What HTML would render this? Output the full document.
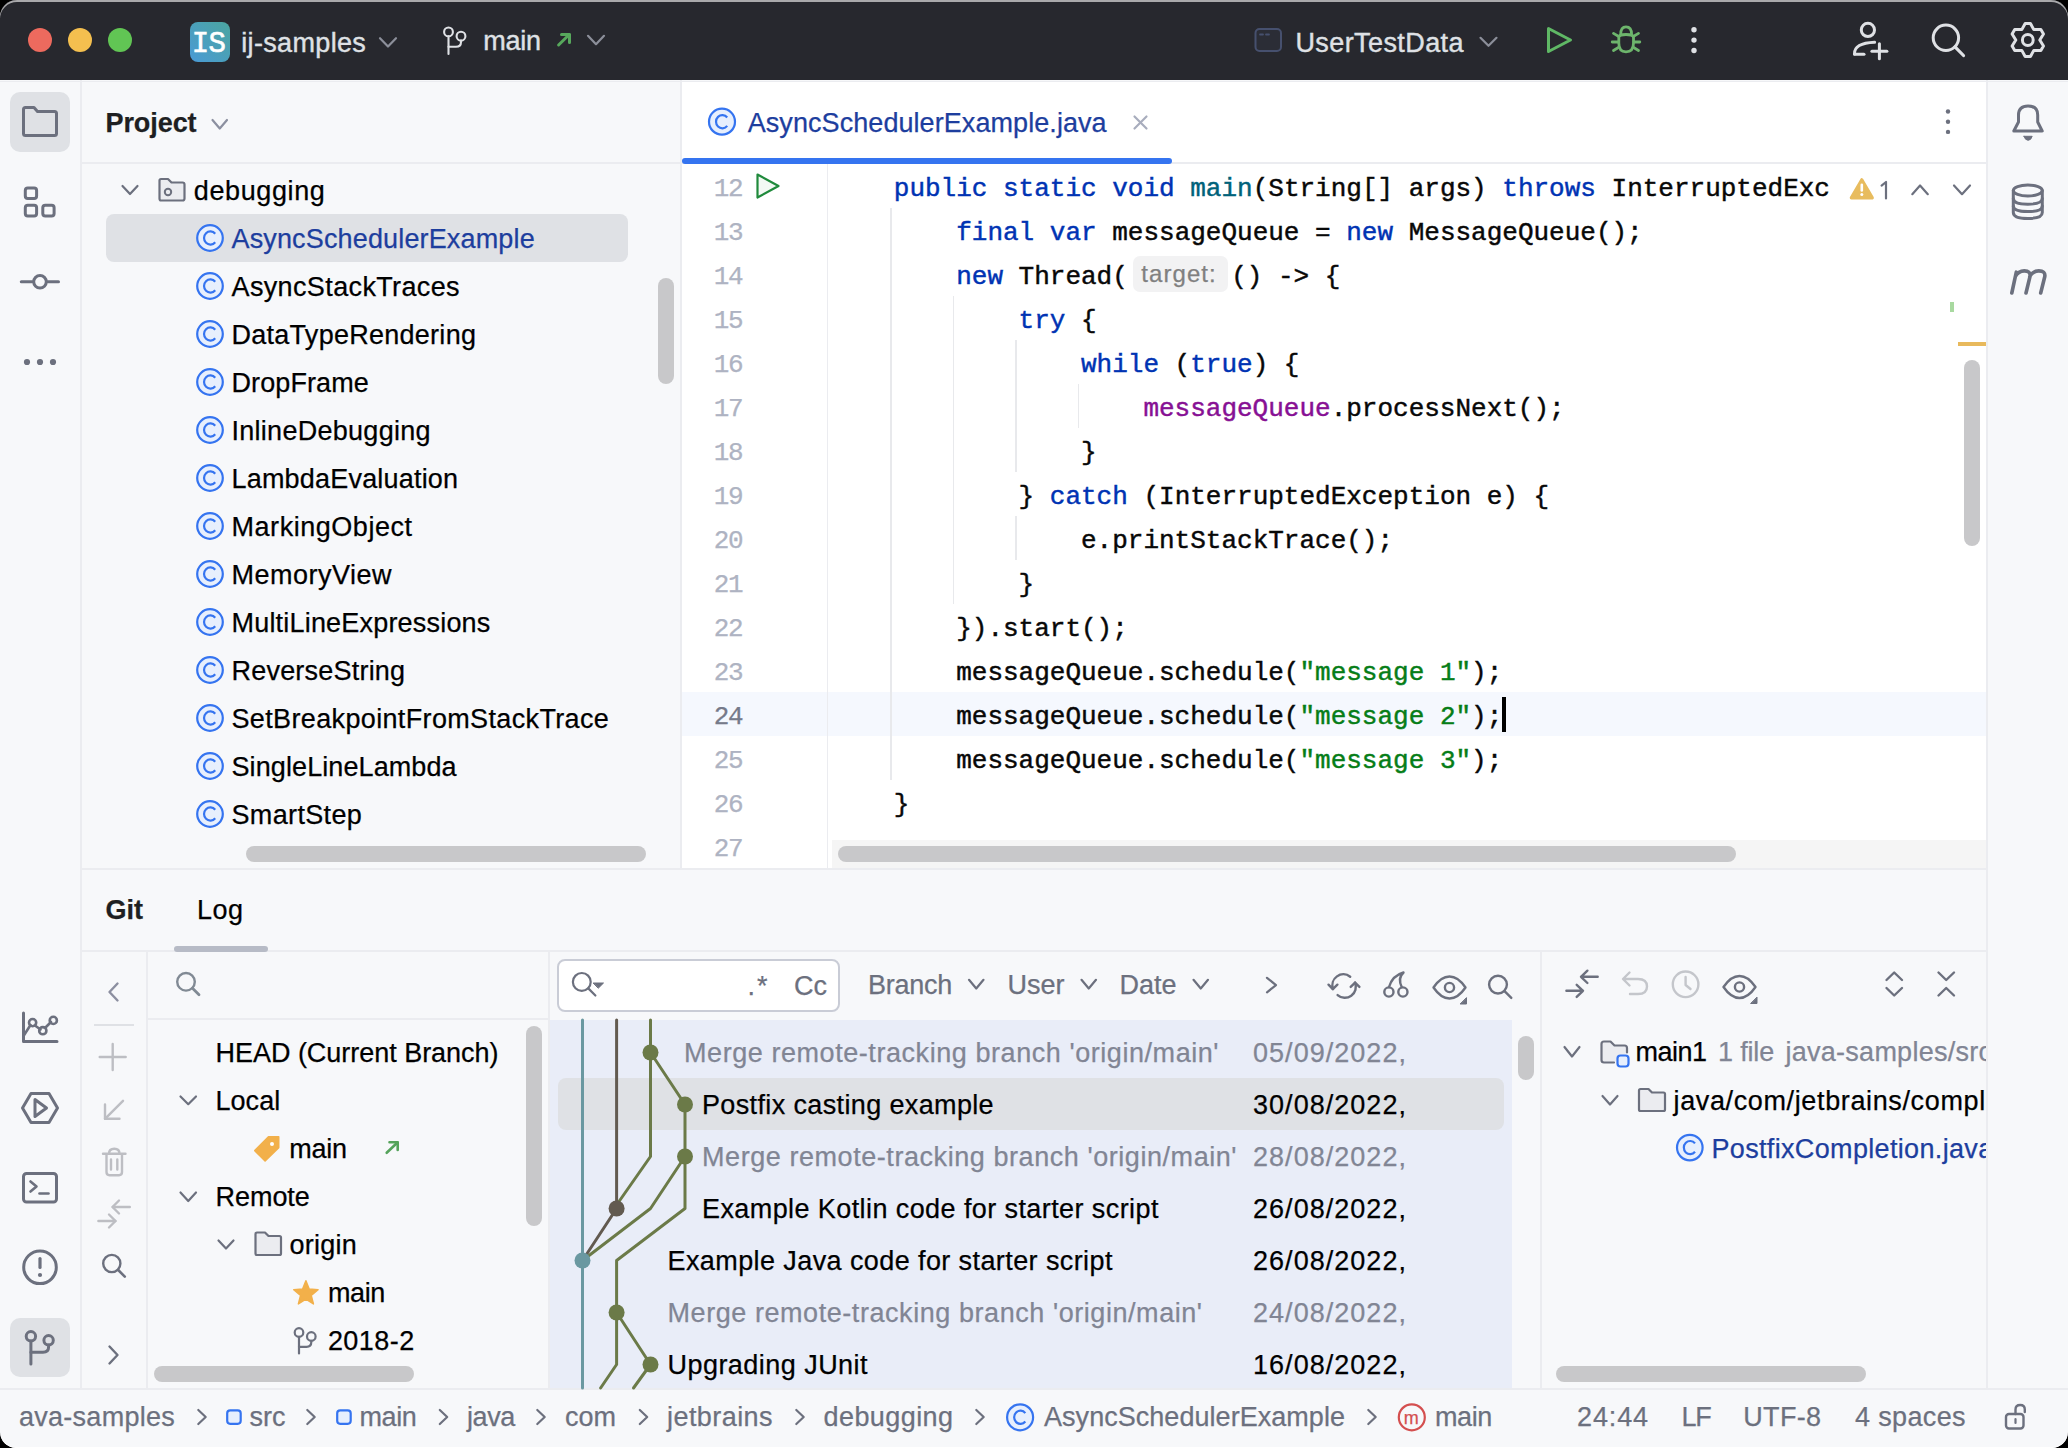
<!DOCTYPE html>
<html><head><meta charset="utf-8">
<style>
*{box-sizing:border-box}
html,body{margin:0;padding:0;background:#000;width:2068px;height:1448px;overflow:hidden}
body{font-family:"Liberation Sans",sans-serif;font-size:27px;color:#000}
.a{position:absolute}
#win{position:absolute;left:0;top:0;width:2068px;height:1448px;border-radius:17px 17px 16px 16px;overflow:hidden;background:#f7f8fa}
.t{position:absolute;white-space:nowrap;line-height:1}
.t{-webkit-text-stroke:0.25px currentColor}
.mono{font-family:"Liberation Mono",monospace;font-size:26px;letter-spacing:0;-webkit-text-stroke:0.45px currentColor}
svg{overflow:visible}
</style></head>
<body><div id="win">

<div class="a" style="left:0px;top:0px;width:2068px;height:80px;background:#27282e;border-radius:0px;"></div>
<div class="a" style="left:682px;top:82px;width:1304px;height:786px;background:#fff;border-radius:0px;"></div>
<div class="a" style="left:0px;top:81px;width:2068px;height:1.2px;background:#ebecf0;border-radius:0px;"></div>
<div class="a" style="left:80px;top:80px;width:2px;height:1308px;background:#ebecf0;border-radius:0px;"></div>
<div class="a" style="left:680px;top:80px;width:2px;height:788px;background:#ebecf0;border-radius:0px;"></div>
<div class="a" style="left:1986px;top:80px;width:2px;height:1308px;background:#ebecf0;border-radius:0px;"></div>
<div class="a" style="left:82px;top:162px;width:598px;height:2px;background:#ebecf0;border-radius:0px;"></div>
<div class="a" style="left:682px;top:162px;width:1304px;height:2px;background:#ebecf0;border-radius:0px;"></div>
<div class="a" style="left:82px;top:868px;width:1904px;height:2px;background:#ebecf0;border-radius:0px;"></div>
<div class="a" style="left:0px;top:1388px;width:2068px;height:2px;background:#ebecf0;border-radius:0px;"></div>
<div class="a" style="left:190px;top:22px;width:40px;height:40px;border-radius:8px;background:linear-gradient(45deg,#4a9ad6 0%,#4ba59f 100%)"></div>
<div class="t" style="left:191.80px;top:29.58px;font-size:29px;color:#fff;letter-spacing:-0.650px;font-family:'Liberation Mono',monospace;-webkit-text-stroke:0.6px #fff">IS</div>
<div class="t" style="left:241.20px;top:29.74px;font-size:27px;color:#dfe1e5;letter-spacing:0.348px;font-family:'Liberation Sans',sans-serif;-webkit-text-stroke:0.4px #dfe1e5">ij-samples</div>
<div class="t" style="left:483.30px;top:28.14px;font-size:27px;color:#dfe1e5;letter-spacing:-0.254px;font-family:'Liberation Sans',sans-serif;-webkit-text-stroke:0.4px #dfe1e5">main</div>
<div class="t" style="left:1295.40px;top:29.74px;font-size:27px;color:#dfe1e5;letter-spacing:0.413px;font-family:'Liberation Sans',sans-serif;-webkit-text-stroke:0.4px #dfe1e5">UserTestData</div>
<div class="a" style="left:10px;top:92px;width:60px;height:60px;background:#dfe1e5;border-radius:10px;"></div>
<div class="a" style="left:10px;top:1318px;width:60px;height:59px;background:#dfe1e5;border-radius:10px;"></div>
<div class="t" style="left:105.50px;top:109.74px;font-size:27px;color:#1e1f22;letter-spacing:-0.076px;font-family:'Liberation Sans',sans-serif;font-weight:bold;">Project</div>
<div class="t" style="left:193.80px;top:177.94px;font-size:27px;color:#000;letter-spacing:0.619px;font-family:'Liberation Sans',sans-serif;">debugging</div>
<div class="a" style="left:106px;top:214px;width:522px;height:48px;background:#dfe1e5;border-radius:8px;"></div>
<div class="t" style="left:231.50px;top:225.94px;font-size:27px;color:#1d3e9e;letter-spacing:0.150px;font-family:'Liberation Sans',sans-serif;">AsyncSchedulerExample</div>
<div class="t" style="left:231.50px;top:273.94px;font-size:27px;color:#000;letter-spacing:0.370px;font-family:'Liberation Sans',sans-serif;">AsyncStackTraces</div>
<div class="t" style="left:231.50px;top:321.94px;font-size:27px;color:#000;letter-spacing:0.267px;font-family:'Liberation Sans',sans-serif;">DataTypeRendering</div>
<div class="t" style="left:231.50px;top:369.94px;font-size:27px;color:#000;letter-spacing:0.098px;font-family:'Liberation Sans',sans-serif;">DropFrame</div>
<div class="t" style="left:231.50px;top:417.94px;font-size:27px;color:#000;letter-spacing:0.276px;font-family:'Liberation Sans',sans-serif;">InlineDebugging</div>
<div class="t" style="left:231.50px;top:465.94px;font-size:27px;color:#000;letter-spacing:0.196px;font-family:'Liberation Sans',sans-serif;">LambdaEvaluation</div>
<div class="t" style="left:231.50px;top:513.94px;font-size:27px;color:#000;letter-spacing:0.543px;font-family:'Liberation Sans',sans-serif;">MarkingObject</div>
<div class="t" style="left:231.50px;top:561.94px;font-size:27px;color:#000;letter-spacing:0.497px;font-family:'Liberation Sans',sans-serif;">MemoryView</div>
<div class="t" style="left:231.50px;top:609.94px;font-size:27px;color:#000;letter-spacing:0.195px;font-family:'Liberation Sans',sans-serif;">MultiLineExpressions</div>
<div class="t" style="left:231.50px;top:657.94px;font-size:27px;color:#000;letter-spacing:0.211px;font-family:'Liberation Sans',sans-serif;">ReverseString</div>
<div class="t" style="left:231.50px;top:705.94px;font-size:27px;color:#000;letter-spacing:0.354px;font-family:'Liberation Sans',sans-serif;">SetBreakpointFromStackTrace</div>
<div class="t" style="left:231.50px;top:753.94px;font-size:27px;color:#000;letter-spacing:0.096px;font-family:'Liberation Sans',sans-serif;">SingleLineLambda</div>
<div class="t" style="left:231.50px;top:801.94px;font-size:27px;color:#000;letter-spacing:0.350px;font-family:'Liberation Sans',sans-serif;">SmartStep</div>
<div class="a" style="left:658px;top:278px;width:16px;height:106px;background:#c8c8ca;border-radius:8px;"></div>
<div class="a" style="left:246px;top:846px;width:400px;height:16px;background:#c8c8ca;border-radius:8px;"></div>
<div class="t" style="left:747.70px;top:109.64px;font-size:27px;color:#1d3e9e;letter-spacing:0.070px;font-family:'Liberation Sans',sans-serif;">AsyncSchedulerExample.java</div>
<div class="a" style="left:682px;top:158px;width:490px;height:6px;background:#3574f0;border-radius:3px;"></div>
<div class="a" style="left:682px;top:692px;width:1304px;height:44px;background:#f5f8fe;border-radius:0px;"></div>
<div class="a" style="left:826.5px;top:164px;width:1.5px;height:704px;background:#ebecf0;border-radius:0px;"></div>
<div class="t" style="left:713.80px;top:176.08px;font-size:26px;color:#aeb3c2;letter-spacing:-1.500px;font-family:'Liberation Mono',monospace;">12</div>
<div class="t" style="left:713.80px;top:220.08px;font-size:26px;color:#aeb3c2;letter-spacing:-1.500px;font-family:'Liberation Mono',monospace;">13</div>
<div class="t" style="left:713.80px;top:264.08px;font-size:26px;color:#aeb3c2;letter-spacing:-1.500px;font-family:'Liberation Mono',monospace;">14</div>
<div class="t" style="left:713.80px;top:308.08px;font-size:26px;color:#aeb3c2;letter-spacing:-1.500px;font-family:'Liberation Mono',monospace;">15</div>
<div class="t" style="left:713.80px;top:352.08px;font-size:26px;color:#aeb3c2;letter-spacing:-1.500px;font-family:'Liberation Mono',monospace;">16</div>
<div class="t" style="left:713.80px;top:396.08px;font-size:26px;color:#aeb3c2;letter-spacing:-1.500px;font-family:'Liberation Mono',monospace;">17</div>
<div class="t" style="left:713.80px;top:440.08px;font-size:26px;color:#aeb3c2;letter-spacing:-1.500px;font-family:'Liberation Mono',monospace;">18</div>
<div class="t" style="left:713.80px;top:484.08px;font-size:26px;color:#aeb3c2;letter-spacing:-1.500px;font-family:'Liberation Mono',monospace;">19</div>
<div class="t" style="left:713.80px;top:528.08px;font-size:26px;color:#aeb3c2;letter-spacing:-1.500px;font-family:'Liberation Mono',monospace;">20</div>
<div class="t" style="left:713.80px;top:572.08px;font-size:26px;color:#aeb3c2;letter-spacing:-1.500px;font-family:'Liberation Mono',monospace;">21</div>
<div class="t" style="left:713.80px;top:616.08px;font-size:26px;color:#aeb3c2;letter-spacing:-1.500px;font-family:'Liberation Mono',monospace;">22</div>
<div class="t" style="left:713.80px;top:660.08px;font-size:26px;color:#aeb3c2;letter-spacing:-1.500px;font-family:'Liberation Mono',monospace;">23</div>
<div class="t" style="left:713.80px;top:704.08px;font-size:26px;color:#767a8a;letter-spacing:-1.500px;font-family:'Liberation Mono',monospace;">24</div>
<div class="t" style="left:713.80px;top:748.08px;font-size:26px;color:#aeb3c2;letter-spacing:-1.500px;font-family:'Liberation Mono',monospace;">25</div>
<div class="t" style="left:713.80px;top:792.08px;font-size:26px;color:#aeb3c2;letter-spacing:-1.500px;font-family:'Liberation Mono',monospace;">26</div>
<div class="t" style="left:713.80px;top:836.08px;font-size:26px;color:#aeb3c2;letter-spacing:-1.500px;font-family:'Liberation Mono',monospace;">27</div>
<div class="a" style="left:890.4px;top:208px;width:1.6px;height:572px;background:#e8e9ec;border-radius:0px;"></div>
<div class="a" style="left:952.8px;top:296px;width:1.6px;height:308px;background:#e8e9ec;border-radius:0px;"></div>
<div class="a" style="left:1015.2px;top:340px;width:1.6px;height:132px;background:#e8e9ec;border-radius:0px;"></div>
<div class="a" style="left:1015.2px;top:516px;width:1.6px;height:44px;background:#e8e9ec;border-radius:0px;"></div>
<div class="a" style="left:1077.6px;top:384px;width:1.6px;height:44px;background:#e8e9ec;border-radius:0px;"></div>
<div class="t mono" style="left:893.80px;top:176.08px;color:#080808;white-space:pre"><span style="color:#0033b3">public static void </span><span style="color:#00627a">main</span><span style="color:#080808">(String[] args) </span><span style="color:#0033b3">throws</span><span style="color:#080808"> InterruptedExc</span></div>
<div class="t mono" style="left:956.20px;top:220.08px;color:#080808;white-space:pre"><span style="color:#0033b3">final var </span><span style="color:#080808">messageQueue = </span><span style="color:#0033b3">new </span><span style="color:#080808">MessageQueue();</span></div>
<div class="t mono" style="left:956.20px;top:264.08px;color:#080808;white-space:pre"><span style="color:#0033b3">new </span><span style="color:#080808">Thread(</span></div>
<div class="a" style="left:1132.6px;top:256px;width:95px;height:35.5px;background:#f2f2f3;border-radius:7px;"></div>
<div class="t" style="left:1141.30px;top:262.48px;font-size:24px;color:#808080;letter-spacing:1.065px;font-family:'Liberation Sans',sans-serif;">target:</div>
<div class="t mono" style="left:1231.2px;top:264.07px;color:#080808;white-space:pre">() -&gt; {</div>
<div class="t mono" style="left:1018.60px;top:308.08px;color:#080808;white-space:pre"><span style="color:#0033b3">try</span><span style="color:#080808"> {</span></div>
<div class="t mono" style="left:1081.00px;top:352.08px;color:#080808;white-space:pre"><span style="color:#0033b3">while</span><span style="color:#080808"> (</span><span style="color:#0033b3">true</span><span style="color:#080808">) {</span></div>
<div class="t mono" style="left:1143.40px;top:396.08px;color:#080808;white-space:pre"><span style="color:#871094">messageQueue</span><span style="color:#080808">.processNext();</span></div>
<div class="t mono" style="left:1081.00px;top:440.08px;color:#080808;white-space:pre"><span style="color:#080808">}</span></div>
<div class="t mono" style="left:1018.60px;top:484.08px;color:#080808;white-space:pre"><span style="color:#080808">} </span><span style="color:#0033b3">catch</span><span style="color:#080808"> (InterruptedException e) {</span></div>
<div class="t mono" style="left:1081.00px;top:528.08px;color:#080808;white-space:pre"><span style="color:#080808">e.printStackTrace();</span></div>
<div class="t mono" style="left:1018.60px;top:572.08px;color:#080808;white-space:pre"><span style="color:#080808">}</span></div>
<div class="t mono" style="left:956.20px;top:616.08px;color:#080808;white-space:pre"><span style="color:#080808">}).start();</span></div>
<div class="t mono" style="left:956.20px;top:660.08px;color:#080808;white-space:pre"><span style="color:#080808">messageQueue.schedule(</span><span style="color:#067d17">&quot;message 1&quot;</span><span style="color:#080808">);</span></div>
<div class="t mono" style="left:956.20px;top:704.08px;color:#080808;white-space:pre"><span style="color:#080808">messageQueue.schedule(</span><span style="color:#067d17">&quot;message 2&quot;</span><span style="color:#080808">);</span></div>
<div class="t mono" style="left:956.20px;top:748.08px;color:#080808;white-space:pre"><span style="color:#080808">messageQueue.schedule(</span><span style="color:#067d17">&quot;message 3&quot;</span><span style="color:#080808">);</span></div>
<div class="t mono" style="left:893.80px;top:792.08px;color:#080808;white-space:pre"><span style="color:#080808">}</span></div>
<div class="a" style="left:1502px;top:696.5px;width:4px;height:35px;background:#000;border-radius:0px;"></div>
<div class="a" style="left:1840px;top:166px;width:146px;height:42px;background:#fff;border-radius:0px;"></div>
<div class="a" style="left:1950px;top:302px;width:4px;height:10px;background:#a8d9a0;border-radius:0px;"></div>
<div class="a" style="left:1958px;top:342px;width:28px;height:4px;background:#e8b95c;border-radius:0px;"></div>
<div class="a" style="left:1964px;top:360px;width:16px;height:186px;background:#c8c8ca;border-radius:8px;"></div>
<div class="a" style="left:832px;top:840px;width:1154px;height:28px;background:#f5f5f5;border-radius:0px;"></div>
<div class="a" style="left:838px;top:846px;width:898px;height:16px;background:#c8c8ca;border-radius:8px;"></div>
<div class="t" style="left:105.50px;top:897.44px;font-size:27px;color:#1e1f22;letter-spacing:-0.028px;font-family:'Liberation Sans',sans-serif;font-weight:bold;">Git</div>
<div class="t" style="left:197.00px;top:897.44px;font-size:27px;color:#000;letter-spacing:0.451px;font-family:'Liberation Sans',sans-serif;">Log</div>
<div class="a" style="left:82px;top:950px;width:1904px;height:2px;background:#ebecf0;border-radius:0px;"></div>
<div class="a" style="left:174px;top:945.5px;width:94px;height:6px;background:#b7bbc6;border-radius:3px;"></div>
<div class="a" style="left:146px;top:952px;width:2px;height:436px;background:#ebecf0;border-radius:0px;"></div>
<div class="a" style="left:548px;top:952px;width:2px;height:436px;background:#ebecf0;border-radius:0px;"></div>
<div class="a" style="left:1540px;top:952px;width:2px;height:436px;background:#ebecf0;border-radius:0px;"></div>
<div class="a" style="left:148px;top:1018px;width:400px;height:2px;background:#ebecf0;border-radius:0px;"></div>
<div class="a" style="left:94px;top:1024px;width:40px;height:2px;background:#dfe1e5;border-radius:0px;"></div>
<div class="t" style="left:215.50px;top:1040.14px;font-size:27px;color:#000;letter-spacing:-0.027px;font-family:'Liberation Sans',sans-serif;">HEAD (Current Branch)</div>
<div class="t" style="left:215.50px;top:1087.94px;font-size:27px;color:#000;letter-spacing:0.031px;font-family:'Liberation Sans',sans-serif;">Local</div>
<div class="t" style="left:289.30px;top:1136.44px;font-size:27px;color:#000;letter-spacing:-0.304px;font-family:'Liberation Sans',sans-serif;">main</div>
<div class="t" style="left:215.50px;top:1183.94px;font-size:27px;color:#000;letter-spacing:-0.039px;font-family:'Liberation Sans',sans-serif;">Remote</div>
<div class="t" style="left:289.50px;top:1231.94px;font-size:27px;color:#000;letter-spacing:0.261px;font-family:'Liberation Sans',sans-serif;">origin</div>
<div class="t" style="left:327.90px;top:1279.94px;font-size:27px;color:#000;letter-spacing:-0.354px;font-family:'Liberation Sans',sans-serif;">main</div>
<div class="t" style="left:327.90px;top:1327.94px;font-size:27px;color:#000;letter-spacing:0.440px;font-family:'Liberation Sans',sans-serif;">2018-2</div>
<div class="a" style="left:526px;top:1026px;width:16px;height:200px;background:#c8c8ca;border-radius:8px;"></div>
<div class="a" style="left:154px;top:1366px;width:260px;height:16px;background:#c8c8ca;border-radius:8px;"></div>
<div class="a" style="left:556.5px;top:958.5px;width:283px;height:53px;border:2px solid #c9ccd6;border-radius:8px;background:#fff"></div>
<div class="t" style="left:747.50px;top:972.94px;font-size:27px;color:#6c707e;letter-spacing:2.000px;font-family:'Liberation Sans',sans-serif;">.*</div>
<div class="t" style="left:794.00px;top:972.94px;font-size:27px;color:#6c707e;letter-spacing:0.000px;font-family:'Liberation Sans',sans-serif;">Cc</div>
<div class="t" style="left:868.00px;top:972.14px;font-size:27px;color:#6c707e;letter-spacing:-0.258px;font-family:'Liberation Sans',sans-serif;">Branch</div>
<div class="t" style="left:1007.50px;top:972.14px;font-size:27px;color:#6c707e;letter-spacing:0.000px;font-family:'Liberation Sans',sans-serif;">User</div>
<div class="t" style="left:1119.50px;top:972.14px;font-size:27px;color:#6c707e;letter-spacing:-0.008px;font-family:'Liberation Sans',sans-serif;">Date</div>
<div class="a" style="left:550px;top:1020px;width:962px;height:368px;background:#e9edf8;border-radius:0px;"></div>
<div class="a" style="left:558px;top:1078px;width:946px;height:52px;background:#dfe1e5;border-radius:8px;"></div>
<div class="a" style="left:1518px;top:1036px;width:16px;height:44px;background:#c8c8ca;border-radius:8px;"></div>
<div class="t" style="left:684.00px;top:1039.94px;font-size:27px;color:#818594;letter-spacing:0.561px;font-family:'Liberation Sans',sans-serif;">Merge remote-tracking branch &#x27;origin/main&#x27;</div>
<div class="t" style="left:1253.00px;top:1039.94px;font-size:27px;color:#818594;letter-spacing:1.034px;font-family:'Liberation Sans',sans-serif;">05/09/2022,</div>
<div class="t" style="left:702.00px;top:1091.94px;font-size:27px;color:#000;letter-spacing:0.364px;font-family:'Liberation Sans',sans-serif;">Postfix casting example</div>
<div class="t" style="left:1253.00px;top:1091.94px;font-size:27px;color:#000;letter-spacing:1.034px;font-family:'Liberation Sans',sans-serif;">30/08/2022,</div>
<div class="t" style="left:702.00px;top:1143.94px;font-size:27px;color:#818594;letter-spacing:0.561px;font-family:'Liberation Sans',sans-serif;">Merge remote-tracking branch &#x27;origin/main&#x27;</div>
<div class="t" style="left:1253.00px;top:1143.94px;font-size:27px;color:#818594;letter-spacing:1.034px;font-family:'Liberation Sans',sans-serif;">28/08/2022,</div>
<div class="t" style="left:702.00px;top:1195.94px;font-size:27px;color:#000;letter-spacing:0.412px;font-family:'Liberation Sans',sans-serif;">Example Kotlin code for starter script</div>
<div class="t" style="left:1253.00px;top:1195.94px;font-size:27px;color:#000;letter-spacing:1.034px;font-family:'Liberation Sans',sans-serif;">26/08/2022,</div>
<div class="t" style="left:667.50px;top:1247.94px;font-size:27px;color:#000;letter-spacing:0.408px;font-family:'Liberation Sans',sans-serif;">Example Java code for starter script</div>
<div class="t" style="left:1253.00px;top:1247.94px;font-size:27px;color:#000;letter-spacing:1.034px;font-family:'Liberation Sans',sans-serif;">26/08/2022,</div>
<div class="t" style="left:667.50px;top:1299.94px;font-size:27px;color:#818594;letter-spacing:0.561px;font-family:'Liberation Sans',sans-serif;">Merge remote-tracking branch &#x27;origin/main&#x27;</div>
<div class="t" style="left:1253.00px;top:1299.94px;font-size:27px;color:#818594;letter-spacing:1.034px;font-family:'Liberation Sans',sans-serif;">24/08/2022,</div>
<div class="t" style="left:667.50px;top:1351.94px;font-size:27px;color:#000;letter-spacing:0.460px;font-family:'Liberation Sans',sans-serif;">Upgrading JUnit</div>
<div class="t" style="left:1253.00px;top:1351.94px;font-size:27px;color:#000;letter-spacing:1.034px;font-family:'Liberation Sans',sans-serif;">16/08/2022,</div>
<div class="t" style="left:1635.40px;top:1039.44px;font-size:27px;color:#000;letter-spacing:-0.506px;font-family:'Liberation Sans',sans-serif;">main1</div>
<div class="a" style="left:1542px;top:1020px;width:444px;height:160px;overflow:hidden">
<div class="t" style="left:176.00px;top:19.44px;font-size:27px;color:#818594;letter-spacing:-0.172px">1 file</div>
<div class="t" style="left:243.60px;top:19.44px;font-size:27px;color:#818594;letter-spacing:0.250px">java-samples/src/main</div>
<div class="t" style="left:131.50px;top:67.94px;font-size:27px;color:#000;letter-spacing:0.633px">java/com/jetbrains/completion</div>
<div class="t" style="left:169.50px;top:115.54px;font-size:27px;color:#1d3e9e;letter-spacing:0.335px">PostfixCompletion.java</div>
</div>
<div class="a" style="left:1556px;top:1366px;width:310px;height:16px;background:#c8c8ca;border-radius:8px;"></div>
<div class="t" style="left:19.00px;top:1404.14px;font-size:27px;color:#6c707e;letter-spacing:0.268px;font-family:'Liberation Sans',sans-serif;">ava-samples</div>
<div class="t" style="left:249.50px;top:1404.14px;font-size:27px;color:#6c707e;letter-spacing:0.005px;font-family:'Liberation Sans',sans-serif;">src</div>
<div class="t" style="left:359.50px;top:1404.14px;font-size:27px;color:#6c707e;letter-spacing:-0.379px;font-family:'Liberation Sans',sans-serif;">main</div>
<div class="t" style="left:467.00px;top:1404.14px;font-size:27px;color:#6c707e;letter-spacing:-0.383px;font-family:'Liberation Sans',sans-serif;">java</div>
<div class="t" style="left:565.00px;top:1404.14px;font-size:27px;color:#6c707e;letter-spacing:0.000px;font-family:'Liberation Sans',sans-serif;">com</div>
<div class="t" style="left:667.00px;top:1404.14px;font-size:27px;color:#6c707e;letter-spacing:0.439px;font-family:'Liberation Sans',sans-serif;">jetbrains</div>
<div class="t" style="left:823.50px;top:1404.14px;font-size:27px;color:#6c707e;letter-spacing:0.431px;font-family:'Liberation Sans',sans-serif;">debugging</div>
<div class="t" style="left:1044.00px;top:1404.14px;font-size:27px;color:#6c707e;letter-spacing:0.040px;font-family:'Liberation Sans',sans-serif;">AsyncSchedulerExample</div>
<div class="t" style="left:1403.70px;top:1409.06px;font-size:18px;color:#d44f4f;letter-spacing:0.000px;font-family:'Liberation Sans',sans-serif;">m</div>
<div class="t" style="left:1435.00px;top:1404.14px;font-size:27px;color:#6c707e;letter-spacing:-0.379px;font-family:'Liberation Sans',sans-serif;">main</div>
<div class="t" style="left:1577.00px;top:1404.14px;font-size:27px;color:#6c707e;letter-spacing:0.887px;font-family:'Liberation Sans',sans-serif;">24:44</div>
<div class="t" style="left:1681.40px;top:1404.14px;font-size:27px;color:#6c707e;letter-spacing:-1.258px;font-family:'Liberation Sans',sans-serif;">LF</div>
<div class="t" style="left:1743.30px;top:1404.14px;font-size:27px;color:#6c707e;letter-spacing:0.300px;font-family:'Liberation Sans',sans-serif;">UTF-8</div>
<div class="t" style="left:1854.90px;top:1404.14px;font-size:27px;color:#6c707e;letter-spacing:0.367px;font-family:'Liberation Sans',sans-serif;">4 spaces</div>
<svg class="a" style="left:0;top:0" width="2068" height="1448" viewBox="0 0 2068 1448"><circle cx="40" cy="40" r="12" fill="#ed6a5e"/><circle cx="80" cy="40" r="12" fill="#f4bf4f"/><circle cx="120" cy="40" r="12" fill="#61c554"/><path d="M380.00 38.20 L388.00 46.50 L396.00 38.20" fill="none" stroke="#8c8f9a" stroke-width="2.2" stroke-linecap="round" stroke-linejoin="round" /><circle cx="448.5" cy="31.9" r="4.4" fill="none" stroke="#dfe1e5" stroke-width="2.1"/><circle cx="461" cy="36.2" r="4.4" fill="none" stroke="#dfe1e5" stroke-width="2.1"/><path d="M448.5 36.3 V54" fill="none" stroke="#dfe1e5" stroke-width="2.1" stroke-linecap="round" stroke-linejoin="round" /><path d="M461 40.6 V42 Q461 46.8 456 46.8 H448.5" fill="none" stroke="#dfe1e5" stroke-width="2.1" stroke-linecap="round" stroke-linejoin="round" /><path d="M558.60 45.00 L569.30 34.50" fill="none" stroke="#57a85c" stroke-width="3" stroke-linecap="round" stroke-linejoin="round" /><path d="M561.50 34.40 L569.50 34.40 L569.50 42.50" fill="none" stroke="#57a85c" stroke-width="3" stroke-linecap="round" stroke-linejoin="round" /><path d="M588.00 35.80 L596.00 44.20 L604.00 35.80" fill="none" stroke="#8c8f9a" stroke-width="2.2" stroke-linecap="round" stroke-linejoin="round" /><rect x="1255.5" y="29" width="25.5" height="22" rx="4" fill="#2b2d36" stroke="#46506e" stroke-width="2"/><path d="M1260 34.5 H1263 M1266 34.5 H1269" fill="none" stroke="#46506e" stroke-width="1.8" stroke-linecap="round" stroke-linejoin="round" /><path d="M1480.50 37.80 L1488.50 45.80 L1496.50 37.80" fill="none" stroke="#8c8f9a" stroke-width="2.2" stroke-linecap="round" stroke-linejoin="round" /><path d="M1548.5 28.5 L1570.5 40 L1548.5 51.5 Z" fill="none" stroke="#5fb865" stroke-width="3" stroke-linecap="round" stroke-linejoin="round" /><path d="M1618.8 37.5 Q1618.8 34.5 1626 34.5 Q1633.5 34.5 1633.5 37.5 V43 Q1633.5 51.8 1626 51.8 Q1618.8 51.8 1618.8 43 Z" fill="none" stroke="#6db56c" stroke-width="2.8" stroke-linecap="round" stroke-linejoin="round" /><path d="M1620.7 34.6 Q1620.7 26.9 1626 26.9 Q1631.6 26.9 1631.6 34.6" fill="none" stroke="#6db56c" stroke-width="2.8" stroke-linecap="round" stroke-linejoin="round" /><path d="M1613.50 33.40 L1618.80 36.50" fill="none" stroke="#6db56c" stroke-width="2.8" stroke-linecap="round" stroke-linejoin="round" /><path d="M1612.20 42.00 L1618.20 42.00" fill="none" stroke="#6db56c" stroke-width="2.8" stroke-linecap="round" stroke-linejoin="round" /><path d="M1613.50 50.50 L1618.80 47.30" fill="none" stroke="#6db56c" stroke-width="2.8" stroke-linecap="round" stroke-linejoin="round" /><path d="M1638.50 33.40 L1633.20 36.50" fill="none" stroke="#6db56c" stroke-width="2.8" stroke-linecap="round" stroke-linejoin="round" /><path d="M1639.80 42.00 L1634.00 42.00" fill="none" stroke="#6db56c" stroke-width="2.8" stroke-linecap="round" stroke-linejoin="round" /><path d="M1638.50 50.50 L1633.20 47.30" fill="none" stroke="#6db56c" stroke-width="2.8" stroke-linecap="round" stroke-linejoin="round" /><circle cx="1694" cy="29.8" r="2.7" fill="#dfe1e5"/><circle cx="1694" cy="40.1" r="2.7" fill="#dfe1e5"/><circle cx="1694" cy="50.5" r="2.7" fill="#dfe1e5"/><circle cx="1867.9" cy="29.9" r="6.6" fill="none" stroke="#dfe1e5" stroke-width="3"/><path d="M1854.5 54 Q1854 43 1874.6 42.2" fill="none" stroke="#dfe1e5" stroke-width="3" stroke-linecap="round" stroke-linejoin="round" /><path d="M1854.5 54.2 H1864" fill="none" stroke="#dfe1e5" stroke-width="3" stroke-linecap="round" stroke-linejoin="round" /><path d="M1879.40 43.80 L1879.40 58.80" fill="none" stroke="#dfe1e5" stroke-width="3" stroke-linecap="round" stroke-linejoin="round" /><path d="M1871.90 51.30 L1886.90 51.30" fill="none" stroke="#dfe1e5" stroke-width="3" stroke-linecap="round" stroke-linejoin="round" /><circle cx="1945.9" cy="37.8" r="12.7" fill="none" stroke="#dfe1e5" stroke-width="3"/><path d="M1955.00 46.90 L1963.50 55.50" fill="none" stroke="#dfe1e5" stroke-width="3.2" stroke-linecap="round" stroke-linejoin="round" /><path d="M2025.17 23.41 L2030.43 23.41 L2033.80 29.61 L2040.86 29.43 L2043.48 33.98 L2039.80 40.00 L2043.48 46.02 L2040.86 50.57 L2033.80 50.39 L2030.43 56.59 L2025.17 56.59 L2021.80 50.39 L2014.74 50.57 L2012.12 46.02 L2015.80 40.00 L2012.12 33.98 L2014.74 29.43 L2021.80 29.61 Z" fill="none" stroke="#dfe1e5" stroke-width="3" stroke-linecap="round" stroke-linejoin="round" /><circle cx="2027.8" cy="40" r="5.4" fill="none" stroke="#dfe1e5" stroke-width="3"/><path d="M23.5 109.5 Q23.5 107.5 25.5 107.5 H34 L37.5 111.5 H54.5 Q56.5 111.5 56.5 113.5 V133.5 Q56.5 135.5 54.5 135.5 H25.5 Q23.5 135.5 23.5 133.5 Z" fill="none" stroke="#6c707e" stroke-width="3" stroke-linecap="round" stroke-linejoin="round" /><rect x="25.3" y="187.9" width="11.3" height="10.7" rx="2.5" fill="none" stroke="#6c707e" stroke-width="3"/><rect x="25.3" y="205.2" width="11.3" height="10.7" rx="2.5" fill="none" stroke="#6c707e" stroke-width="3"/><rect x="42.8" y="205.2" width="11.3" height="10.7" rx="2.5" fill="none" stroke="#6c707e" stroke-width="3"/><path d="M21.30 281.80 L32.50 281.80" fill="none" stroke="#6c707e" stroke-width="3" stroke-linecap="round" stroke-linejoin="round" /><path d="M47.50 281.80 L58.50 281.80" fill="none" stroke="#6c707e" stroke-width="3" stroke-linecap="round" stroke-linejoin="round" /><circle cx="40" cy="281.8" r="6.3" fill="none" stroke="#6c707e" stroke-width="3"/><circle cx="27" cy="362" r="3.1" fill="#6c707e"/><circle cx="40" cy="362" r="3.1" fill="#6c707e"/><circle cx="53" cy="362" r="3.1" fill="#6c707e"/><path d="M23.5 1013 V1041.5 H57" fill="none" stroke="#6c707e" stroke-width="3" stroke-linecap="round" stroke-linejoin="round" /><path d="M23.5 1036 L30.5 1025 M35 1025.5 L40.5 1029.5 M45.5 1027.5 L51 1022" fill="none" stroke="#6c707e" stroke-width="2.6" stroke-linecap="round" stroke-linejoin="round" /><circle cx="32.6" cy="1022.6" r="3.6" fill="none" stroke="#6c707e" stroke-width="2.6"/><circle cx="42.8" cy="1030.7" r="3.6" fill="none" stroke="#6c707e" stroke-width="2.6"/><circle cx="53.3" cy="1020.4" r="3.6" fill="none" stroke="#6c707e" stroke-width="2.6"/><path d="M31 1093.5 H49 L57.5 1108 L49 1122.5 H31 L22.5 1108 Z" fill="none" stroke="#6c707e" stroke-width="3" stroke-linecap="round" stroke-linejoin="round" /><path d="M35 1099.5 L46.5 1108 L35 1116.5 Z" fill="none" stroke="#6c707e" stroke-width="3" stroke-linecap="round" stroke-linejoin="round" /><rect x="23.5" y="1173.5" width="33" height="28.5" rx="3" fill="none" stroke="#6c707e" stroke-width="3"/><path d="M30.5 1181.5 L36.5 1186.5 L30.5 1191.5" fill="none" stroke="#6c707e" stroke-width="2.6" stroke-linecap="round" stroke-linejoin="round" /><path d="M39.5 1193.5 H48.5" fill="none" stroke="#6c707e" stroke-width="2.6" stroke-linecap="round" stroke-linejoin="round" /><circle cx="40" cy="1267.3" r="16.3" fill="none" stroke="#6c707e" stroke-width="3"/><path d="M40 1258.5 V1267.5" fill="none" stroke="#6c707e" stroke-width="3.2" stroke-linecap="round" stroke-linejoin="round" /><circle cx="40" cy="1275" r="2.1" fill="#6c707e"/><circle cx="30.9" cy="1336.3" r="4.7" fill="none" stroke="#6c707e" stroke-width="3"/><circle cx="48.6" cy="1340.3" r="4.7" fill="none" stroke="#6c707e" stroke-width="3"/><path d="M30.9 1341 V1364" fill="none" stroke="#6c707e" stroke-width="3" stroke-linecap="round" stroke-linejoin="round" /><path d="M48.6 1345 V1347 Q48.6 1352.3 43 1352.3 H30.9" fill="none" stroke="#6c707e" stroke-width="3" stroke-linecap="round" stroke-linejoin="round" /><path d="M2013.8 131 L2018.5 122 V115 Q2018.5 105.9 2028 105.9 Q2037.7 105.9 2037.7 115 V122 L2042.2 131 Z" fill="none" stroke="#6c707e" stroke-width="3" stroke-linecap="round" stroke-linejoin="round" /><path d="M2024 136.3 H2032.2 Q2031 140.3 2028.1 140.3 Q2025.2 140.3 2024 136.3 Z" fill="#6c707e" stroke="#6c707e" stroke-width="1" stroke-linecap="round" stroke-linejoin="round" /><ellipse cx="2027.8" cy="190.5" rx="14.5" ry="5.5" fill="none" stroke="#6c707e" stroke-width="3"/><path d="M2013.3 190.5 V212.5 Q2013.3 218.5 2027.8 218.5 Q2042.3 218.5 2042.3 212.5 V190.5" fill="none" stroke="#6c707e" stroke-width="3" stroke-linecap="round" stroke-linejoin="round" /><path d="M2013.3 198.5 Q2013.3 204.2 2027.8 204.2 Q2042.3 204.2 2042.3 198.5" fill="none" stroke="#6c707e" stroke-width="3" stroke-linecap="round" stroke-linejoin="round" /><path d="M2013.3 206 Q2013.3 211.6 2027.8 211.6 Q2042.3 211.6 2042.3 206" fill="none" stroke="#6c707e" stroke-width="3" stroke-linecap="round" stroke-linejoin="round" /><path d="M2011.8 293 L2016.3 272.2 M2015.4 276.5 Q2018.3 270.9 2024.3 270.9 Q2030.8 270.9 2030 276.5 L2026 293 M2029.8 276.5 Q2032.8 270.9 2038.8 270.9 Q2045.6 270.9 2044.8 276.5 L2040.7 293" fill="none" stroke="#6c707e" stroke-width="3.6" stroke-linecap="round" stroke-linejoin="round" /><path d="M212.50 120.00 L219.75 128.50 L227.00 120.00" fill="none" stroke="#8c90a0" stroke-width="2.2" stroke-linecap="round" stroke-linejoin="round" /><path d="M122.50 186.00 L130.00 194.00 L137.50 186.00" fill="none" stroke="#6c707e" stroke-width="2.2" stroke-linecap="round" stroke-linejoin="round" /><path d="M159.5 180.5 Q159.5 179 161 179 H168 L171.5 182.5 H182.5 Q184.5 182.5 184.5 184.5 V198.5 Q184.5 200.5 182.5 200.5 H161 Q159.5 200.5 159.5 198.5 Z" fill="#ebecf0" stroke="#6c707e" stroke-width="2.2" stroke-linecap="round" stroke-linejoin="round" /><circle cx="168" cy="192" r="3.2" fill="none" stroke="#6c707e" stroke-width="2"/><circle cx="210" cy="238" r="12.8" fill="#e7effd" stroke="#3574f0" stroke-width="2.2"/><path d="M215.20 233.80 A6.3 6.6 0 1 0 215.20 242.20" fill="none" stroke="#3574f0" stroke-width="2.2" stroke-linecap="butt"/><circle cx="210" cy="286" r="12.8" fill="#e7effd" stroke="#3574f0" stroke-width="2.2"/><path d="M215.20 281.80 A6.3 6.6 0 1 0 215.20 290.20" fill="none" stroke="#3574f0" stroke-width="2.2" stroke-linecap="butt"/><circle cx="210" cy="334" r="12.8" fill="#e7effd" stroke="#3574f0" stroke-width="2.2"/><path d="M215.20 329.80 A6.3 6.6 0 1 0 215.20 338.20" fill="none" stroke="#3574f0" stroke-width="2.2" stroke-linecap="butt"/><circle cx="210" cy="382" r="12.8" fill="#e7effd" stroke="#3574f0" stroke-width="2.2"/><path d="M215.20 377.80 A6.3 6.6 0 1 0 215.20 386.20" fill="none" stroke="#3574f0" stroke-width="2.2" stroke-linecap="butt"/><circle cx="210" cy="430" r="12.8" fill="#e7effd" stroke="#3574f0" stroke-width="2.2"/><path d="M215.20 425.80 A6.3 6.6 0 1 0 215.20 434.20" fill="none" stroke="#3574f0" stroke-width="2.2" stroke-linecap="butt"/><circle cx="210" cy="478" r="12.8" fill="#e7effd" stroke="#3574f0" stroke-width="2.2"/><path d="M215.20 473.80 A6.3 6.6 0 1 0 215.20 482.20" fill="none" stroke="#3574f0" stroke-width="2.2" stroke-linecap="butt"/><circle cx="210" cy="526" r="12.8" fill="#e7effd" stroke="#3574f0" stroke-width="2.2"/><path d="M215.20 521.80 A6.3 6.6 0 1 0 215.20 530.20" fill="none" stroke="#3574f0" stroke-width="2.2" stroke-linecap="butt"/><circle cx="210" cy="574" r="12.8" fill="#e7effd" stroke="#3574f0" stroke-width="2.2"/><path d="M215.20 569.80 A6.3 6.6 0 1 0 215.20 578.20" fill="none" stroke="#3574f0" stroke-width="2.2" stroke-linecap="butt"/><circle cx="210" cy="622" r="12.8" fill="#e7effd" stroke="#3574f0" stroke-width="2.2"/><path d="M215.20 617.80 A6.3 6.6 0 1 0 215.20 626.20" fill="none" stroke="#3574f0" stroke-width="2.2" stroke-linecap="butt"/><circle cx="210" cy="670" r="12.8" fill="#e7effd" stroke="#3574f0" stroke-width="2.2"/><path d="M215.20 665.80 A6.3 6.6 0 1 0 215.20 674.20" fill="none" stroke="#3574f0" stroke-width="2.2" stroke-linecap="butt"/><circle cx="210" cy="718" r="12.8" fill="#e7effd" stroke="#3574f0" stroke-width="2.2"/><path d="M215.20 713.80 A6.3 6.6 0 1 0 215.20 722.20" fill="none" stroke="#3574f0" stroke-width="2.2" stroke-linecap="butt"/><circle cx="210" cy="766" r="12.8" fill="#e7effd" stroke="#3574f0" stroke-width="2.2"/><path d="M215.20 761.80 A6.3 6.6 0 1 0 215.20 770.20" fill="none" stroke="#3574f0" stroke-width="2.2" stroke-linecap="butt"/><circle cx="210" cy="814" r="12.8" fill="#e7effd" stroke="#3574f0" stroke-width="2.2"/><path d="M215.20 809.80 A6.3 6.6 0 1 0 215.20 818.20" fill="none" stroke="#3574f0" stroke-width="2.2" stroke-linecap="butt"/><circle cx="722" cy="121.7" r="13" fill="#e7effd" stroke="#3574f0" stroke-width="2.2"/><path d="M727.20 117.50 A6.3 6.6 0 1 0 727.20 125.90" fill="none" stroke="#3574f0" stroke-width="2.2" stroke-linecap="butt"/><path d="M1134.50 116.50 L1146.50 128.50" fill="none" stroke="#a8adbd" stroke-width="2.2" stroke-linecap="round" stroke-linejoin="round" /><path d="M1146.50 116.50 L1134.50 128.50" fill="none" stroke="#a8adbd" stroke-width="2.2" stroke-linecap="round" stroke-linejoin="round" /><circle cx="1948" cy="111.5" r="2.2" fill="#6c707e"/><circle cx="1948" cy="121.8" r="2.2" fill="#6c707e"/><circle cx="1948" cy="131.9" r="2.2" fill="#6c707e"/><path d="M757.5 174.5 L778.5 186 L757.5 197.5 Z" fill="#f3f9f4" stroke="#208a3c" stroke-width="2.2" stroke-linecap="round" stroke-linejoin="round" /><path d="M1861.8 179.8 L1872.3 197.8 H1851.3 Z" fill="#e8bc5e" stroke="#e8bc5e" stroke-width="3.2" stroke-linecap="round" stroke-linejoin="round" /><path d="M1861.8 184.8 V190.5" fill="none" stroke="#fff" stroke-width="2.6" stroke-linecap="round" stroke-linejoin="round" /><circle cx="1861.8" cy="194.6" r="1.5" fill="#fff"/><path d="M1881.6 185.6 L1886 182 V198.5" fill="none" stroke="#6c707e" stroke-width="2.2" stroke-linecap="round" stroke-linejoin="round" /><path d="M1912.30 194.20 L1920.05 185.50 L1927.80 194.20" fill="none" stroke="#6c707e" stroke-width="2.2" stroke-linecap="round" stroke-linejoin="round" /><path d="M1954.00 185.50 L1962.00 194.20 L1970.00 185.50" fill="none" stroke="#6c707e" stroke-width="2.2" stroke-linecap="round" stroke-linejoin="round" /><path d="M117.50 983.50 L109.50 992.00 L117.50 1000.50" fill="none" stroke="#8c8fa0" stroke-width="2.4" stroke-linecap="round" stroke-linejoin="round" /><path d="M112.70 1044.00 L112.70 1070.00" fill="none" stroke="#bdbec3" stroke-width="2.4" stroke-linecap="round" stroke-linejoin="round" /><path d="M99.70 1057.00 L125.70 1057.00" fill="none" stroke="#bdbec3" stroke-width="2.4" stroke-linecap="round" stroke-linejoin="round" /><path d="M123.00 1100.80 L105.00 1118.80" fill="none" stroke="#bdbec3" stroke-width="2.4" stroke-linecap="round" stroke-linejoin="round" /><path d="M105.00 1104.50 L105.00 1118.80 L119.50 1118.80" fill="none" stroke="#bdbec3" stroke-width="2.4" stroke-linecap="round" stroke-linejoin="round" /><path d="M103 1153.7 H125.5 M106.5 1153.7 V1172 Q106.5 1175.2 109.5 1175.2 H119 Q122 1175.2 122 1172 V1153.7 M109 1153.7 Q109 1148.8 114.3 1148.8 Q119.5 1148.8 119.5 1153.7 M111 1159.5 V1169.5 M117.3 1159.5 V1169.5" fill="none" stroke="#bdbec3" stroke-width="2.4" stroke-linecap="round" stroke-linejoin="round" /><path d="M129.80 1207.00 L112.80 1207.00" fill="none" stroke="#bdbec3" stroke-width="2.4" stroke-linecap="round" stroke-linejoin="round" /><path d="M119.00 1200.50 L112.50 1207.00 L119.00 1213.50" fill="none" stroke="#bdbec3" stroke-width="2.4" stroke-linecap="round" stroke-linejoin="round" /><path d="M98.40 1221.00 L115.40 1221.00" fill="none" stroke="#bdbec3" stroke-width="2.4" stroke-linecap="round" stroke-linejoin="round" /><path d="M109.00 1214.50 L115.50 1221.00 L109.00 1227.50" fill="none" stroke="#bdbec3" stroke-width="2.4" stroke-linecap="round" stroke-linejoin="round" /><circle cx="111.8" cy="1263.5" r="8.6" fill="none" stroke="#6c707e" stroke-width="2.4"/><path d="M118.20 1270.00 L124.80 1276.60" fill="none" stroke="#6c707e" stroke-width="2.6" stroke-linecap="round" stroke-linejoin="round" /><path d="M109.50 1346.50 L117.50 1355.00 L109.50 1363.50" fill="none" stroke="#6c707e" stroke-width="2.4" stroke-linecap="round" stroke-linejoin="round" /><circle cx="186" cy="981.8" r="8.8" fill="none" stroke="#818a94" stroke-width="2.4"/><path d="M192.50 988.30 L199.00 994.80" fill="none" stroke="#818a94" stroke-width="2.8" stroke-linecap="round" stroke-linejoin="round" /><path d="M180.50 1096.50 L188.25 1104.20 L196.00 1096.50" fill="none" stroke="#6c707e" stroke-width="2.2" stroke-linecap="round" stroke-linejoin="round" /><path d="M268.5 1136.8 H278.7 V1147.6 L265.1 1161 L254.8 1150.6 Z" fill="#f2b04a" stroke="#f2b04a" stroke-width="1.6" stroke-linecap="round" stroke-linejoin="round" /><circle cx="272" cy="1143.9" r="2" fill="#fff"/><path d="M386.70 1152.80 L397.50 1142.50" fill="none" stroke="#55a35b" stroke-width="2.6" stroke-linecap="round" stroke-linejoin="round" /><path d="M389.50 1142.30 L397.70 1142.30 L397.70 1150.00" fill="none" stroke="#55a35b" stroke-width="2.6" stroke-linecap="round" stroke-linejoin="round" /><path d="M180.50 1192.50 L188.25 1201.00 L196.00 1192.50" fill="none" stroke="#6c707e" stroke-width="2.2" stroke-linecap="round" stroke-linejoin="round" /><path d="M218.50 1240.50 L226.00 1248.50 L233.50 1240.50" fill="none" stroke="#6c707e" stroke-width="2.2" stroke-linecap="round" stroke-linejoin="round" /><path d="M255.5 1234 Q255.5 1232.5 257 1232.5 H265 L268.5 1236 H279.5 Q281 1236 281 1237.5 V1253.5 Q281 1255 279.5 1255 H257 Q255.5 1255 255.5 1253.5 Z" fill="#ebecf0" stroke="#6c707e" stroke-width="2.2" stroke-linecap="round" stroke-linejoin="round" /><path d="M305.90 1280.80 L309.19 1289.07 L318.07 1289.64 L311.23 1295.33 L313.42 1303.96 L305.90 1299.20 L298.38 1303.96 L300.57 1295.33 L293.73 1289.64 L302.61 1289.07 Z" fill="#f2b04a" stroke="#f2b04a" stroke-width="1.5" stroke-linejoin="round"/><circle cx="299" cy="1332.5" r="4.3" fill="none" stroke="#6c707e" stroke-width="2.2"/><circle cx="311.3" cy="1336.5" r="4.3" fill="none" stroke="#6c707e" stroke-width="2.2"/><path d="M299 1336.8 V1353.5" fill="none" stroke="#6c707e" stroke-width="2.2" stroke-linecap="round" stroke-linejoin="round" /><path d="M311.3 1340.8 V1342 Q311.3 1346.8 306.5 1346.8 H299" fill="none" stroke="#6c707e" stroke-width="2.2" stroke-linecap="round" stroke-linejoin="round" /><circle cx="581.8" cy="981.9" r="8.9" fill="none" stroke="#6c707e" stroke-width="2.2"/><path d="M588.30 988.40 L595.40 995.50" fill="none" stroke="#6c707e" stroke-width="2.2" stroke-linecap="round" stroke-linejoin="round" /><path d="M593.5 983 L603.5 983 L598.5 988 Z" fill="#6c707e" stroke="#6c707e" stroke-width="1" stroke-linecap="round" stroke-linejoin="round" /><path d="M969.00 979.80 L976.25 988.50 L983.50 979.80" fill="none" stroke="#6c707e" stroke-width="2.2" stroke-linecap="round" stroke-linejoin="round" /><path d="M1081.50 979.80 L1088.75 988.50 L1096.00 979.80" fill="none" stroke="#6c707e" stroke-width="2.2" stroke-linecap="round" stroke-linejoin="round" /><path d="M1193.50 979.80 L1200.75 988.50 L1208.00 979.80" fill="none" stroke="#6c707e" stroke-width="2.2" stroke-linecap="round" stroke-linejoin="round" /><path d="M1267.00 977.80 L1276.00 985.05 L1267.00 992.30" fill="none" stroke="#6c707e" stroke-width="2.2" stroke-linecap="round" stroke-linejoin="round" /><path d="M1350.2 976.7 A11 11 0 0 0 1333 989" fill="none" stroke="#6c707e" stroke-width="2.4" stroke-linecap="round" stroke-linejoin="round" /><path d="M1337.6 995.1 A11 11 0 0 0 1355 982.6" fill="none" stroke="#6c707e" stroke-width="2.4" stroke-linecap="round" stroke-linejoin="round" /><path d="M1328.5 984.7 L1332.8 989.1 L1337.4 984.7" fill="none" stroke="#6c707e" stroke-width="2.4" stroke-linecap="round" stroke-linejoin="round" /><path d="M1350.7 986.9 L1355.1 982.6 L1359.4 986.9" fill="none" stroke="#6c707e" stroke-width="2.4" stroke-linecap="round" stroke-linejoin="round" /><circle cx="1388.9" cy="992" r="4.6" fill="none" stroke="#6c707e" stroke-width="2.4"/><circle cx="1402.9" cy="992" r="4.6" fill="none" stroke="#6c707e" stroke-width="2.4"/><path d="M1389 987 Q1392.5 975.5 1403.5 972.5 M1401.7 987 Q1397.5 978 1403.5 972.5" fill="none" stroke="#6c707e" stroke-width="2.4" stroke-linecap="round" stroke-linejoin="round" /><path d="M1433.5 987.5 Q1441 976.5 1449.5 976.5 Q1458 976.5 1465.5 987.5 Q1458 998.5 1449.5 998.5 Q1441 998.5 1433.5 987.5 Z" fill="none" stroke="#6c707e" stroke-width="2.4" stroke-linecap="round" stroke-linejoin="round" /><circle cx="1449.5" cy="987.5" r="4.6" fill="none" stroke="#6c707e" stroke-width="2.4"/><path d="M1466.5 998 V1004 H1460.5 Z" fill="#6c707e" stroke="#6c707e" stroke-width="1" stroke-linecap="round" stroke-linejoin="round" /><circle cx="1498" cy="984.6" r="8.9" fill="none" stroke="#6c707e" stroke-width="2.4"/><path d="M1504.50 991.10 L1511.30 997.90" fill="none" stroke="#6c707e" stroke-width="2.4" stroke-linecap="round" stroke-linejoin="round" /><path d="M582.50 1020.00 L582.50 1388.00" fill="none" stroke="#6a98a1" stroke-width="3" stroke-linecap="round" stroke-linejoin="round" /><path d="M616.60 1020.00 L616.60 1208.50" fill="none" stroke="#625a50" stroke-width="3" stroke-linecap="round" stroke-linejoin="round" /><path d="M616.60 1208.50 L582.50 1260.50" fill="none" stroke="#625a50" stroke-width="3" stroke-linecap="round" stroke-linejoin="round" /><path d="M650.50 1020.00 L650.50 1156.50 L617.60 1203.50" fill="none" stroke="#6b7a48" stroke-width="3" stroke-linecap="round" stroke-linejoin="round" /><path d="M650.50 1052.50 L685.00 1104.50 L685.00 1156.50" fill="none" stroke="#6b7a48" stroke-width="3" stroke-linecap="round" stroke-linejoin="round" /><path d="M685.00 1156.50 L650.50 1208.50 L582.50 1260.50" fill="none" stroke="#6b7a48" stroke-width="3" stroke-linecap="round" stroke-linejoin="round" /><path d="M685.00 1156.50 L685.00 1208.50 L616.60 1260.50 L616.60 1364.50 L600.60 1388.00" fill="none" stroke="#6b7a48" stroke-width="3" stroke-linecap="round" stroke-linejoin="round" /><path d="M616.60 1312.50 L650.50 1364.50 L633.50 1388.00" fill="none" stroke="#6b7a48" stroke-width="3" stroke-linecap="round" stroke-linejoin="round" /><circle cx="650.5" cy="1052.5" r="8" fill="#6b7a48"/><circle cx="685" cy="1104.5" r="8" fill="#6b7a48"/><circle cx="685" cy="1156.5" r="8" fill="#6b7a48"/><circle cx="616.6" cy="1208.5" r="8" fill="#625a50"/><circle cx="582.5" cy="1260.5" r="8" fill="#6a98a1"/><circle cx="616.6" cy="1312.5" r="8" fill="#6b7a48"/><circle cx="650.5" cy="1364.5" r="8" fill="#6b7a48"/><path d="M1566.4 990.8 H1583 M1576.7 984.8 L1583 990.8 L1576.7 996.9" fill="none" stroke="#6c707e" stroke-width="2.4" stroke-linecap="round" stroke-linejoin="round" /><path d="M1597.7 976.8 H1581 M1587.4 970.7 L1581 976.8 L1587.4 983" fill="none" stroke="#6c707e" stroke-width="2.4" stroke-linecap="round" stroke-linejoin="round" /><path d="M1624 979 H1638 Q1647 979 1647 986.5 Q1647 994 1638 994 H1630 M1629.5 972.5 L1623 979 L1629.5 985.5" fill="none" stroke="#c4c6cb" stroke-width="2.4" stroke-linecap="round" stroke-linejoin="round" /><circle cx="1685.6" cy="984.3" r="12.8" fill="none" stroke="#c4c6cb" stroke-width="2.4"/><path d="M1685.6 977 V985 L1690.5 989" fill="none" stroke="#c4c6cb" stroke-width="2.4" stroke-linecap="round" stroke-linejoin="round" /><path d="M1723.5 987 Q1731 976 1739.5 976 Q1748 976 1755.5 987 Q1748 998 1739.5 998 Q1731 998 1723.5 987 Z" fill="none" stroke="#6c707e" stroke-width="2.4" stroke-linecap="round" stroke-linejoin="round" /><circle cx="1739.5" cy="987" r="4.6" fill="none" stroke="#6c707e" stroke-width="2.4"/><path d="M1757 997.5 V1003.5 H1751 Z" fill="#6c707e" stroke="#6c707e" stroke-width="1" stroke-linecap="round" stroke-linejoin="round" /><path d="M1886.50 980.00 L1894.20 972.50 L1902.00 980.00" fill="none" stroke="#6c707e" stroke-width="2.4" stroke-linecap="round" stroke-linejoin="round" /><path d="M1886.50 988.00 L1894.20 995.50 L1902.00 988.00" fill="none" stroke="#6c707e" stroke-width="2.4" stroke-linecap="round" stroke-linejoin="round" /><path d="M1938.50 972.50 L1946.20 980.00 L1954.00 972.50" fill="none" stroke="#6c707e" stroke-width="2.4" stroke-linecap="round" stroke-linejoin="round" /><path d="M1938.50 995.50 L1946.20 988.00 L1954.00 995.50" fill="none" stroke="#6c707e" stroke-width="2.4" stroke-linecap="round" stroke-linejoin="round" /><path d="M1564.50 1047.00 L1572.00 1056.50 L1579.50 1047.00" fill="none" stroke="#6c707e" stroke-width="2.2" stroke-linecap="round" stroke-linejoin="round" /><path d="M1614 1062.5 H1604 Q1601.5 1062.5 1601.5 1060 V1044 Q1601.5 1041.5 1604 1041.5 H1610.5 L1614.5 1045.5 H1624.5 Q1627 1045.5 1627 1048 V1052.5" fill="#ebecf0" stroke="#6c707e" stroke-width="2.2" stroke-linecap="round" stroke-linejoin="round" /><rect x="1617.5" y="1055.5" width="11" height="11" rx="3" fill="#e7effd" stroke="#3574f0" stroke-width="2.2"/><path d="M1602.50 1096.00 L1610.00 1104.50 L1617.50 1096.00" fill="none" stroke="#6c707e" stroke-width="2.2" stroke-linecap="round" stroke-linejoin="round" /><path d="M1639 1090.5 Q1639 1089 1640.5 1089 H1648.5 L1652 1092.5 H1663.5 Q1665 1092.5 1665 1094 V1109.5 Q1665 1111 1663.5 1111 H1640.5 Q1639 1111 1639 1109.5 Z" fill="#ebecf0" stroke="#6c707e" stroke-width="2.2" stroke-linecap="round" stroke-linejoin="round" /><circle cx="1689.8" cy="1147.6" r="12.8" fill="#e7effd" stroke="#3574f0" stroke-width="2.2"/><path d="M1695.00 1143.40 A6.3 6.6 0 1 0 1695.00 1151.80" fill="none" stroke="#3574f0" stroke-width="2.2" stroke-linecap="butt"/><path d="M198.30 1410.00 L205.70 1417.00 L198.30 1424.00" fill="none" stroke="#6c707e" stroke-width="2.2" stroke-linecap="round" stroke-linejoin="round" /><rect x="227.2" y="1410.3" width="13.5" height="13.5" rx="3" fill="#e7effd" stroke="#3574f0" stroke-width="2.2"/><path d="M307.30 1410.00 L314.70 1417.00 L307.30 1424.00" fill="none" stroke="#6c707e" stroke-width="2.2" stroke-linecap="round" stroke-linejoin="round" /><rect x="337.2" y="1410.3" width="13.5" height="13.5" rx="3" fill="#e7effd" stroke="#3574f0" stroke-width="2.2"/><path d="M439.80 1410.00 L447.20 1417.00 L439.80 1424.00" fill="none" stroke="#6c707e" stroke-width="2.2" stroke-linecap="round" stroke-linejoin="round" /><path d="M537.30 1410.00 L544.70 1417.00 L537.30 1424.00" fill="none" stroke="#6c707e" stroke-width="2.2" stroke-linecap="round" stroke-linejoin="round" /><path d="M639.80 1410.00 L647.20 1417.00 L639.80 1424.00" fill="none" stroke="#6c707e" stroke-width="2.2" stroke-linecap="round" stroke-linejoin="round" /><path d="M796.30 1410.00 L803.70 1417.00 L796.30 1424.00" fill="none" stroke="#6c707e" stroke-width="2.2" stroke-linecap="round" stroke-linejoin="round" /><path d="M976.30 1410.00 L983.70 1417.00 L976.30 1424.00" fill="none" stroke="#6c707e" stroke-width="2.2" stroke-linecap="round" stroke-linejoin="round" /><circle cx="1020.1" cy="1417.3" r="13" fill="#e7effd" stroke="#3574f0" stroke-width="2.2"/><path d="M1025.30 1413.10 A6.3 6.6 0 1 0 1025.30 1421.50" fill="none" stroke="#3574f0" stroke-width="2.2" stroke-linecap="butt"/><path d="M1368.30 1410.00 L1375.70 1417.00 L1368.30 1424.00" fill="none" stroke="#6c707e" stroke-width="2.2" stroke-linecap="round" stroke-linejoin="round" /><circle cx="1411.8" cy="1417.3" r="13" fill="none" stroke="#d44f4f" stroke-width="2.2"/><rect x="2006" y="1414" width="17.5" height="14.5" rx="3" fill="none" stroke="#6c707e" stroke-width="2.4"/><path d="M2015.5 1414 V1409.5 Q2015.5 1405 2020.2 1405 Q2024.8 1405 2024.8 1409.5 V1412" fill="none" stroke="#6c707e" stroke-width="2.4" stroke-linecap="round" stroke-linejoin="round" /><path d="M2015.5 1419 V1423" fill="none" stroke="#6c707e" stroke-width="2.2" stroke-linecap="round" stroke-linejoin="round" /></svg>
<div class="a" style="left:0;top:0;width:2068px;height:1448px;border-radius:17px 17px 16px 16px;box-shadow:inset 0 2px 0 #a9a9ab, inset 0 -1px 0 #ffffff"></div>
</div></body></html>
